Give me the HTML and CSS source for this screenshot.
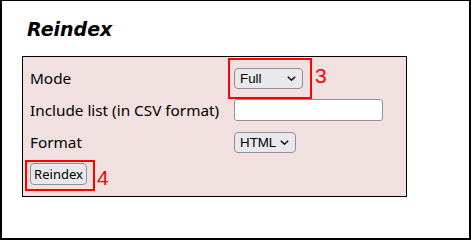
FILE: index.html
```html
<!DOCTYPE html>
<html>
<head>
<meta charset="utf-8">
<link rel="stylesheet" href="styles.css">
</head>
<body>
<div class="frame">
  <h2 class="title">Reindex</h2>
  <div class="panel">
    <div class="label">Mode</div>
    <div class="ctl">
      <select class="sel sel-full"><option>Full</option></select>
      <span class="mark mark-mode"></span>
      <span class="num num-3">3</span>
    </div>
    <div class="label">Include list (in CSV format)</div>
    <div class="ctl"><input class="txt" type="text"></div>
    <div class="label">Format</div>
    <div class="ctl"><select class="sel sel-html"><option>HTML</option></select></div>
    <div class="ctl btn-cell">
      <button class="btn">Reindex</button>
      <span class="mark mark-btn"></span>
      <span class="num num-4">4</span>
    </div>
  </div>
</div>
</body>
</html>
```
FILE: styles.css
```css
html, body { margin: 0; padding: 0; background: #fff; }
.frame {
  width: 471px;
  height: 240px;
  box-sizing: border-box;
  border-style: solid;
  border-color: #000;
  border-width: 1px 2px 2px 2px;
  padding: 15px 0 0 20px;
}
.title {
  margin: 0 0 14px 5px;
  font-family: "DejaVu Sans", sans-serif;
  font-weight: bold;
  font-style: italic;
  font-size: 19px;
  line-height: 26px;
  color: #000;
}
.panel {
  width: 376px;
  border: 1px solid #000;
  background: #f0e0e0;
  padding: 5px 0 6px 7px;
  display: grid;
  grid-template-columns: 204px auto;
  grid-auto-rows: 32px;
  align-items: center;
}
.label {
  font-family: "Noto Sans", sans-serif;
  font-size: 15.3px;
  color: #000;
}
.ctl { position: relative; display: flex; align-items: center; }
.btn-cell { grid-column: 1 / 2; }
.sel {
  -webkit-appearance: none;
  appearance: none;
  height: 21px;
  box-sizing: border-box;
  border: 1px solid #8f8f9d;
  border-radius: 4px;
  background-color: #e9e9ed;
  background-image: url("data:image/svg+xml;utf8,<svg xmlns='http://www.w3.org/2000/svg' width='9' height='5' viewBox='0 0 9 5'><path d='M0.8 0.8 L4.5 4.2 L8.2 0.8' fill='none' stroke='%23000' stroke-width='1.4'/></svg>");
  background-repeat: no-repeat;
  background-position: right 6px center;
  font-family: "Liberation Sans", Arial, sans-serif;
  font-size: 13.33px;
  color: #000;
  padding: 0 0 0 5px;
  margin: 0;
}
.sel-full { width: 69px; }
.sel-html { width: 62px; }
.txt {
  width: 149px;
  height: 22px;
  box-sizing: border-box;
  border: 1px solid #8f8f9d;
  border-radius: 3px;
  background: #fff;
  margin: 0;
  padding: 0 4px;
}
.btn {
  width: 57px;
  height: 22px;
  box-sizing: border-box;
  border: 1px solid #8f8f9d;
  border-radius: 4px;
  background: #e9e9ed;
  font-family: "Noto Sans", sans-serif;
  font-size: 13px;
  color: #000;
  padding: 0;
  margin: 0;
}
.mark {
  position: absolute;
  border: 2px solid #f00;
  box-sizing: border-box;
}
.mark-mode { left: -6px; top: -10px; width: 84px; height: 41px; }
.mark-btn { left: -5px; top: -3px; width: 70px; height: 31px; }
.num {
  position: absolute;
  font-family: "Liberation Sans", Arial, sans-serif;
  font-size: 21px;
  line-height: 24px;
  color: #f00;
}
.num-3 { left: 81px; top: -4px; }
.num-4 { left: 67px; top: 3px; }
```
